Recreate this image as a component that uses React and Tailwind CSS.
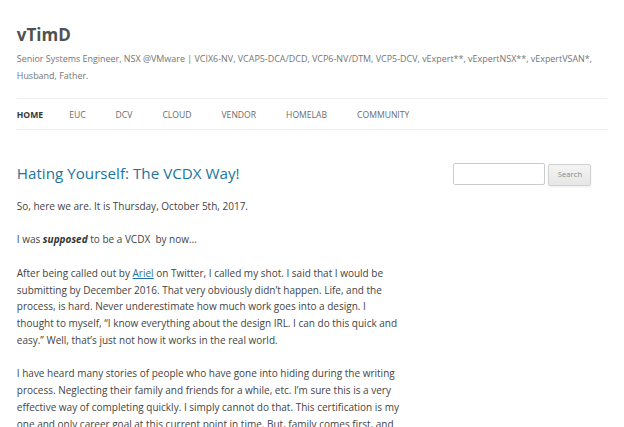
import React from "react";

const navItems = ["Home", "EUC", "DCV", "Cloud", "Vendor", "Homelab", "Community"];

const App = () => {
  return (
    <div className="min-h-screen bg-white text-[#444] font-['Open_Sans',sans-serif]">
      <div className="px-[16.8px] pt-[23px]">
        <header>
          <h1 className="text-[17px] leading-[24px] font-bold text-[#515151]">vTimD</h1>
          <h2 className="mt-[2.5px] text-[8.95px] leading-[17px] text-[#757575] font-normal">
            Senior Systems Engineer, NSX @VMware | VCIX6-NV, VCAP5-DCA/DCD, VCP6-NV/DTM, VCP5-DCV, vExpert**, vExpertNSX**, vExpertVSAN*, Husband, Father.
          </h2>
          <nav className="mt-[14.5px] border-y border-[#ededed]">
            <ul className="flex">
              {navItems.map((item, i) => (
                <li
                  key={item}
                  className={`text-[8.6px] pt-[2.5px] leading-[27.5px] uppercase ${i === 0 ? "font-bold text-[#373737]" : i === 1 ? "ml-[26px] text-[#6a6a6a]" : "ml-[30px] text-[#6a6a6a]"}`}
                >
                  {item}
                </li>
              ))}
            </ul>
          </nav>
        </header>

        <div className="flex justify-between mt-[32px]">
          <article className="w-[65.1%]">
            <h1 className="text-[15.2px] leading-[22px] text-[#21759b] font-normal">
              Hating Yourself: The VCDX Way!
            </h1>
            <div className="mt-[14px] text-[10px] leading-[16.8px] text-[#444] flex flex-col gap-[16.6px]">
              <p>So, here we are. It is Thursday, October 5th, 2017.</p>
              <p>
                I was <strong className="italic font-bold text-[#333]">supposed</strong> to be a VCDX&nbsp; by now…
              </p>
              <p>
                After being called out by <a className="text-[#21759b] underline">Ariel</a> on Twitter, I called my shot. I said that I would be submitting by December 2016. That very obviously didn’t happen. Life, and the process, is hard. Never underestimate how much work goes into a design. I thought to myself, “I know everything about the design IRL. I can do this quick and easy.” Well, that’s just not how it works in the real world.
              </p>
              <p>
                I have heard many stories of people who have gone into hiding during the writing process. Neglecting their family and friends for a while, etc. I’m sure this is a very effective way of completing quickly. I simply cannot do that. This certification is my one and only career goal at this current point in time. But, family comes first, and always will.
              </p>
            </div>
          </article>

          <aside className="w-[26.04%] pt-px">
            <form className="flex items-start gap-[3px]">
              <input
                type="text"
                className="w-[92px] h-[22px] border border-[#ccc] rounded-[2px] bg-white"
              />
              <button
                type="button"
                className="mt-px w-[43px] h-[22px] border border-[#d2d2d2] rounded-[2px] bg-gradient-to-b from-[#f4f4f4] to-[#e6e6e6] text-[7.7px] text-[#8a8a8a] shadow-[0_1px_2px_rgba(64,64,64,0.1)]"
              >
                Search
              </button>
            </form>
          </aside>
        </div>
      </div>
    </div>
  );
};

export default App;
